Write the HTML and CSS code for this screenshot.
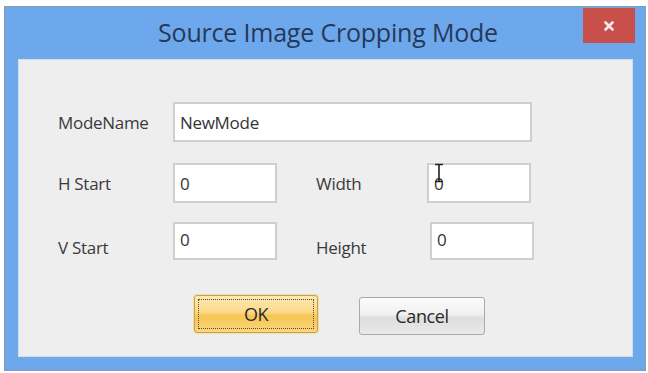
FILE: index.html
```html
<!DOCTYPE html>
<html>
<head>
<meta charset="utf-8">
<link rel="stylesheet" href="styles.css">
</head>
<body>
<div class="window">
  <div class="titlebar">
    <div class="title">Source Image Cropping Mode</div>
    <div class="close">
      <svg width="12" height="12" viewBox="0 0 12 12"><path d="M2.5 2.5 L9.5 9.5 M9.5 2.5 L2.5 9.5" stroke="#f4e8e8" stroke-width="2.6" stroke-linecap="round"/></svg>
    </div>
  </div>
  <div class="panel">
    <div class="row row1">
      <span class="label lbl-a">ModeName</span>
      <div class="field wide">NewMode</div>
    </div>
    <div class="row row2">
      <span class="label lbl-a">H Start</span>
      <div class="field small">0</div>
      <span class="label lbl-b">Width</span>
      <div class="field small cursorbox">0
        <svg class="ibeam" width="12" height="20" viewBox="0 0 12 20"><path d="M2 1.5 H10 M6 1.5 V18.5 M2 18.5 H10" stroke="#222" stroke-width="1.6" fill="none"/></svg>
      </div>
    </div>
    <div class="row row3">
      <span class="label lbl-a low">V Start</span>
      <div class="field small top">0</div>
      <span class="label lbl-b low">Height</span>
      <div class="field small top shift">0</div>
    </div>
    <div class="buttons">
      <button class="btn ok"><span class="focus">OK</span></button>
      <button class="btn cancel">Cancel</button>
    </div>
  </div>
</div>
</body>
</html>
```

FILE: styles.css
```css
html, body {
  margin: 0;
  padding: 0;
  background: #ffffff;
  width: 648px;
  height: 373px;
  overflow: hidden;
}
body {
  padding: 7px 3px 0 5px;
  box-sizing: border-box;
  font-family: "Open Sans", "Noto Sans", sans-serif;
}
.window {
  position: relative;
  width: 640px;
  height: 363px;
  background: #6ea8ec;
  box-shadow: 0 0 0 1px #8a9bb0;
  box-sizing: border-box;
  display: flex;
  flex-direction: column;
  padding: 0 12px 13px 13px;
}
.titlebar {
  height: 52px;
  display: flex;
  align-items: center;
  justify-content: center;
}
.title {
  font-family: "Open Sans", "Noto Sans", sans-serif;
  font-size: 25px;
  color: #26395a;
  letter-spacing: -0.2px;
  margin-left: 5px;
  margin-top: -2px;
}
.close {
  position: absolute;
  top: 1px;
  right: 10px;
  width: 52px;
  height: 35px;
  background: #c9504a;
  display: flex;
  align-items: center;
  justify-content: center;
}
.panel {
  flex: 1;
  background: #eeeeee;
  box-shadow: inset 0 0 0 1px #d9dde3;
  display: flex;
  flex-direction: column;
  padding: 43px 0 0 40px;
  box-sizing: border-box;
}
.row {
  display: flex;
  align-items: center;
}
.row2 { margin-top: 21px; }
.row3 { margin-top: 19px; align-items: flex-start; }
.label {
  font-size: 17px;
  color: #3a3a3a;
  letter-spacing: -0.3px;
}
.lbl-a { width: 115px; }
.lbl-b { width: 111px; margin-left: 39px; }
.low { margin-top: 14px; }
.field {
  background: #ffffff;
  border: 2px solid #cfcfcf;
  box-sizing: border-box;
  font-size: 17px;
  color: #333;
  padding: 0 0 0 5px;
  display: flex;
  align-items: center;
  letter-spacing: -0.3px;
}
.wide { width: 359px; height: 40px; }
.small { width: 104px; height: 40px; }
.top { align-items: flex-start; padding-top: 4px; height: 38px; }
.shift { margin-left: 3px; }
.cursorbox { position: relative; }
.ibeam {
  position: absolute;
  left: 4px;
  top: -2px;
}
.buttons {
  display: flex;
  margin-top: 35px;
  padding-left: 136px;
  gap: 41px;
}
.btn {
  font-family: "Open Sans", "Noto Sans", sans-serif;
  font-size: 18px;
  color: #2a2a2a;
  height: 38px;
  border-radius: 3px;
  padding: 0;
  box-sizing: border-box;
  letter-spacing: -0.4px;
}
.ok {
  width: 124px;
  border: 1px solid #c7a24a;
  background: linear-gradient(#fdeab5 0%, #fbd98a 45%, #f7c652 55%, #f9d67e 100%);
  box-shadow: 0 0 0 1px #f3dfab;
  padding: 3px;
}
.focus {
  display: flex;
  align-items: center;
  justify-content: center;
  height: 100%;
  border: 1px dotted #5a4a20;
  box-sizing: border-box;
}
.cancel {
  width: 126px;
  margin-top: 2px;
  border: 1px solid #a9a9a9;
  background: linear-gradient(#fbfbfb 0%, #f1f1f1 45%, #dedede 55%, #e9e9e9 100%);
}
```
